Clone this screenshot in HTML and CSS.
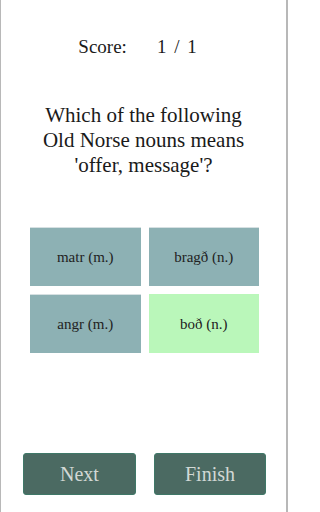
FILE: index.html
```html
<!DOCTYPE html>
<html>
<head>
<meta charset="utf-8">
<link rel="stylesheet" href="styles.css">
</head>
<body>
<div class="screen">
  <div class="score"><span>Score:</span><span class="val">1 / 1</span></div>
  <div class="question">Which of the following<br>Old Norse nouns means<br>'offer, message'?</div>
  <div class="grid">
    <div class="opt">matr (m.)</div>
    <div class="opt">bragð (n.)</div>
    <div class="opt">angr (m.)</div>
    <div class="opt correct">boð (n.)</div>
  </div>
  <div class="spacer"></div>
  <div class="buttons">
    <div class="btn">Next</div>
    <div class="btn finish">Finish</div>
  </div>
</div>
</body>
</html>
```
FILE: styles.css
```css
html, body {
  margin: 0;
  padding: 0;
  background: #ffffff;
}
.screen {
  box-sizing: border-box;
  width: 288px;
  height: 512px;
  border-left: 1px solid #b8b8b8;
  border-right: 2px solid #b8b8b8;
  display: flex;
  flex-direction: column;
  font-family: "Liberation Serif", serif;
  color: #1a1a1a;
}
.score {
  margin: 35px 12px 0 0;
  height: 24px;
  display: flex;
  justify-content: center;
  gap: 30px;
  font-size: 19px;
  line-height: 24px;
}
.score .val {
  word-spacing: 3px;
}
.question {
  margin-top: 44px;
  text-align: center;
  font-size: 21px;
  line-height: 25px;
}
.grid {
  margin: 49px 27px 0 29px;
  display: grid;
  grid-template-columns: 1fr 1fr;
  grid-auto-rows: 59px;
  gap: 8px;
}
.opt {
  background: #8db1b4;
  border-top: 1px solid #d6e0e2;
  display: flex;
  align-items: center;
  justify-content: center;
  font-size: 15px;
  color: #222;
}
.opt.correct {
  background: #baf7ba;
  border-top-color: #baf7ba;
}
.spacer {
  flex: 1;
}
.buttons {
  display: flex;
  justify-content: space-between;
  margin: 0 20px 17px 22px;
}
.btn {
  box-sizing: border-box;
  width: 113px;
  height: 42px;
  background: #4b6a62;
  border: 1px solid #3f7868;
  border-radius: 3px;
  display: flex;
  align-items: center;
  justify-content: center;
  font-size: 20px;
  color: #d2d8d5;
}
.btn.finish {
  width: 112px;
}
```
